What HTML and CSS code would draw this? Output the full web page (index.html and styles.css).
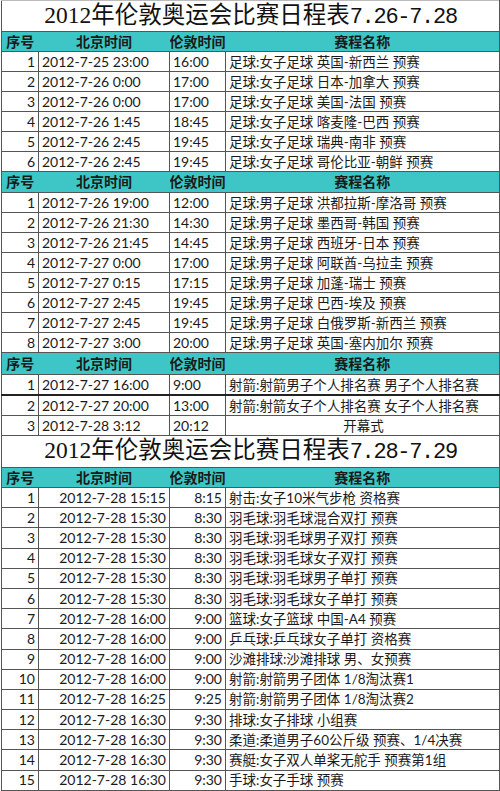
FILE: index.html
```html
<!DOCTYPE html>
<html lang="zh-CN">
<head>
<meta charset="utf-8">
<link rel="stylesheet" href="styles.css">
</head>
<body>
<table class="sheet">
<colgroup><col class="c1"><col class="c2"><col class="c3"><col class="c4"></colgroup>
<tbody>
<tr class="title"><td colspan="4">2012年伦敦奥运会比赛日程表<span class="mono">7.26-7.28</span></td></tr>
<tr class="head"><td>序号</td><td>北京时间</td><td>伦敦时间</td><td>赛程名称</td></tr>
<tr><td class="n">1</td><td>2012-7-25 23:00</td><td>16:00</td><td>足球:女子足球 英国-新西兰 预赛</td></tr>
<tr><td class="n">2</td><td>2012-7-26 0:00</td><td>17:00</td><td>足球:女子足球 日本-加拿大 预赛</td></tr>
<tr><td class="n">3</td><td>2012-7-26 0:00</td><td>17:00</td><td>足球:女子足球 美国-法国 预赛</td></tr>
<tr><td class="n">4</td><td>2012-7-26 1:45</td><td>18:45</td><td>足球:女子足球 喀麦隆-巴西 预赛</td></tr>
<tr><td class="n">5</td><td>2012-7-26 2:45</td><td>19:45</td><td>足球:女子足球 瑞典-南非 预赛</td></tr>
<tr><td class="n">6</td><td>2012-7-26 2:45</td><td>19:45</td><td>足球:女子足球 哥伦比亚-朝鲜 预赛</td></tr>
<tr class="head h2"><td>序号</td><td>北京时间</td><td>伦敦时间</td><td>赛程名称</td></tr>
<tr><td class="n">1</td><td>2012-7-26 19:00</td><td>12:00</td><td>足球:男子足球 洪都拉斯-摩洛哥 预赛</td></tr>
<tr><td class="n">2</td><td>2012-7-26 21:30</td><td>14:30</td><td>足球:男子足球 墨西哥-韩国 预赛</td></tr>
<tr><td class="n">3</td><td>2012-7-26 21:45</td><td>14:45</td><td>足球:男子足球 西班牙-日本 预赛</td></tr>
<tr><td class="n">4</td><td>2012-7-27 0:00</td><td>17:00</td><td>足球:男子足球 阿联酋-乌拉圭 预赛</td></tr>
<tr><td class="n">5</td><td>2012-7-27 0:15</td><td>17:15</td><td>足球:男子足球 加蓬-瑞士 预赛</td></tr>
<tr><td class="n">6</td><td>2012-7-27 2:45</td><td>19:45</td><td>足球:男子足球 巴西-埃及 预赛</td></tr>
<tr><td class="n">7</td><td>2012-7-27 2:45</td><td>19:45</td><td>足球:男子足球 白俄罗斯-新西兰 预赛</td></tr>
<tr><td class="n">8</td><td>2012-7-27 3:00</td><td>20:00</td><td>足球:男子足球 英国-塞内加尔 预赛</td></tr>
<tr class="head h3"><td>序号</td><td>北京时间</td><td>伦敦时间</td><td>赛程名称</td></tr>
<tr class="thickb"><td class="n">1</td><td>2012-7-27 16:00</td><td>9:00</td><td>射箭:射箭男子个人排名赛 男子个人排名赛</td></tr>
<tr><td class="n">2</td><td>2012-7-27 20:00</td><td>13:00</td><td>射箭:射箭女子个人排名赛 女子个人排名赛</td></tr>
<tr><td class="n">3</td><td>2012-7-28 3:12</td><td>20:12</td><td class="ctr">开幕式</td></tr>
<tr class="title t2"><td colspan="4">2012年伦敦奥运会比赛日程表<span class="mono">7.28-7.29</span></td></tr>
<tr class="head"><td>序号</td><td>北京时间</td><td>伦敦时间</td><td>赛程名称</td></tr>
<tr class="r"><td class="n">1</td><td>2012-7-28 15:15</td><td>8:15</td><td>射击:女子10米气步枪 资格赛</td></tr>
<tr class="r"><td class="n">2</td><td>2012-7-28 15:30</td><td>8:30</td><td>羽毛球:羽毛球混合双打 预赛</td></tr>
<tr class="r"><td class="n">3</td><td>2012-7-28 15:30</td><td>8:30</td><td>羽毛球:羽毛球男子双打 预赛</td></tr>
<tr class="r"><td class="n">4</td><td>2012-7-28 15:30</td><td>8:30</td><td>羽毛球:羽毛球女子双打 预赛</td></tr>
<tr class="r"><td class="n">5</td><td>2012-7-28 15:30</td><td>8:30</td><td>羽毛球:羽毛球男子单打 预赛</td></tr>
<tr class="r"><td class="n">6</td><td>2012-7-28 15:30</td><td>8:30</td><td>羽毛球:羽毛球女子单打 预赛</td></tr>
<tr class="r"><td class="n">7</td><td>2012-7-28 16:00</td><td>9:00</td><td>篮球:女子篮球 中国-A4 预赛</td></tr>
<tr class="r"><td class="n">8</td><td>2012-7-28 16:00</td><td>9:00</td><td>乒乓球:乒乓球女子单打 资格赛</td></tr>
<tr class="r"><td class="n">9</td><td>2012-7-28 16:00</td><td>9:00</td><td>沙滩排球:沙滩排球 男、女预赛</td></tr>
<tr class="r"><td class="n">10</td><td>2012-7-28 16:00</td><td>9:00</td><td>射箭:射箭男子团体 1/8淘汰赛1</td></tr>
<tr class="r"><td class="n">11</td><td>2012-7-28 16:25</td><td>9:25</td><td>射箭:射箭男子团体 1/8淘汰赛2</td></tr>
<tr class="r"><td class="n">12</td><td>2012-7-28 16:30</td><td>9:30</td><td>排球:女子排球 小组赛</td></tr>
<tr class="r"><td class="n">13</td><td>2012-7-28 16:30</td><td>9:30</td><td>柔道:柔道男子60公斤级 预赛、1/4决赛</td></tr>
<tr class="r"><td class="n">14</td><td>2012-7-28 16:30</td><td>9:30</td><td>赛艇:女子双人单桨无舵手 预赛第1组</td></tr>
<tr class="r"><td class="n">15</td><td>2012-7-28 16:30</td><td>9:30</td><td>手球:女子手球 预赛</td></tr>
</tbody>
</table>
</body>
</html>
```
FILE: styles.css
```css
html, body {
  margin: 0;
  padding: 0;
  background: #ffffff;
}
body {
  padding-left: 1px;
}
.sheet {
  width: 498px;
  border-collapse: collapse;
  table-layout: fixed;
  font-family: Lato, "Noto Sans CJK SC", sans-serif;
  font-size: 14px;
  color: #1a1a1a;
}
.c1 { width: 37px; }
.c2 { width: 131px; }
.c3 { width: 56px; }
.c4 { width: 274px; }

.sheet td {
  height: 19px;
  padding: 0 3px;
  line-height: 16px;
  border: 1px solid #555;
  white-space: nowrap;
  overflow: hidden;
  vertical-align: middle;
}
.sheet td:last-child {
  font-size: 13.5px;
  padding-left: 3px;
  padding-right: 1px;
}
.sheet td.n {
  text-align: right;
  padding-right: 3px;
}
.sheet td.ctr {
  text-align: center;
}
.sheet tr.r td {
  text-align: right;
  height: 19.2px;
}
.sheet tr.r td:last-child {
  text-align: left;
}

.sheet tr.title td {
  height: 30px;
  text-align: center;
  font-family: "Liberation Serif", "Noto Sans CJK SC", serif;
  font-size: 23.5px;
  line-height: 22px;
  color: #111;
  padding: 0;
  border-color: #555;
  border-top-color: #bbb;
}
.sheet tr.t2 td {
  height: 31px;
  border-top: 1px solid #333;
}
.mono {
  font-family: "Liberation Mono", monospace;
  font-size: 22px;
  letter-spacing: -1.3px;
}

.sheet tr.head td {
  background: #3ec6c6;
  font-weight: bold;
  text-align: center;
  border-left: none;
  border-right: none;
  font-size: 14px;
  padding: 0;
  height: 19px;
  line-height: 16px;
}
.sheet tr.head td:first-child {
  border-left: 1px solid #555;
}
.sheet tr.head td:last-child {
  border-right: 1px solid #555;
}
.sheet tr.h2 td {
  height: 20px;
}
.sheet tr.h3 td {
  height: 21px;
}
.sheet tr.thickb td {
  border-bottom: 2px solid #222;
}
```
